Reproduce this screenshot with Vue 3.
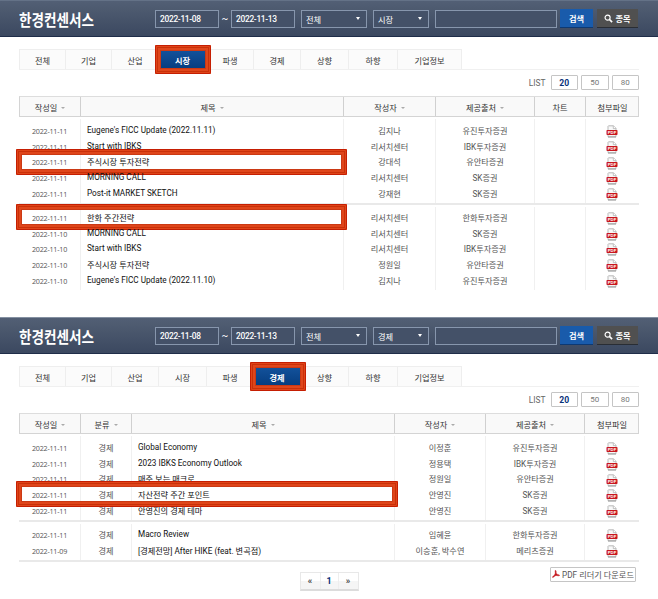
<template>
  <div class="page">
    <section v-for="panel in panels" :key="panel.category" class="panel" :class="panel.name">
      <header class="search-bar">
        <h1 class="logo">한경컨센서스</h1>
        <div class="field date">2022-11-08</div>
        <span class="tilde">~</span>
        <div class="field date">2022-11-13</div>
        <div class="field select select-all">전체<i class="arrow"></i></div>
        <div class="field select select-type">{{ panel.category }}<i class="arrow"></i></div>
        <div class="field keyword"></div>
        <button class="btn btn-search">검색</button>
        <button class="btn btn-item">
          <svg viewBox="0 0 10 10" width="9" height="9">
            <circle cx="4" cy="4" r="2.8" fill="none" stroke="#fff" stroke-width="1.3" />
            <path d="M6 6 L9 9" stroke="#fff" stroke-width="1.8" />
          </svg>
          <span>종목</span>
        </button>
      </header>

      <nav class="tabs">
        <div
          v-for="tab in tabs"
          :key="tab.label"
          class="tab"
          :class="{ active: tab.label === panel.category }"
          :style="{ width: tab.width + 'px' }"
        >
          <span>{{ tab.label }}</span>
          <div v-if="tab.label === panel.category" class="mark mark-tab"></div>
        </div>
      </nav>

      <div class="list-size">
        <span class="list-label">LIST</span>
        <span class="size on">20</span>
        <span class="size">50</span>
        <span class="size">80</span>
      </div>

      <div class="table">
        <div class="row head">
          <div v-for="col in panel.columns" :key="col.key" class="cell" :class="'col-' + col.key">
            <span>{{ col.label }}</span><i v-if="col.sort" class="sort"></i>
          </div>
        </div>
        <div v-for="(group, g) in panel.groups" :key="g" class="group">
          <div class="lines">
            <div v-for="col in panel.columns" :key="col.key" class="cell" :class="'col-' + col.key"></div>
          </div>
          <div v-for="(item, i) in group" :key="i" class="row">
            <div
              v-for="col in panel.columns"
              :key="col.key"
              class="cell"
              :class="'col-' + col.key"
            >
              <svg v-if="col.key === 'file'" class="pdf" viewBox="0 0 12 13" width="12" height="13">
                <path d="M2.5 .8 H7.5 L10 3.3 V11.7 H2 V1.3 Z" fill="#f8f8f8" stroke="#aaa" stroke-width=".8" />
                <path d="M7.3 .8 V3.6 H10" fill="#fff" stroke="#aaa" stroke-width=".7" />
                <path d="M2 12.1 H10" stroke="#888" stroke-width=".7" />
                <rect x=".5" y="5" width="11" height="5" rx=".8" fill="#c9161e" />
                <text x="6" y="9.1" text-anchor="middle">PDF</text>
              </svg>
              <span v-else>{{ item[col.key] }}</span>
            </div>
            <div v-if="item.marked" class="mark mark-row"></div>
          </div>
        </div>
      </div>

      <footer v-if="panel.paging" class="footer">
        <div class="paging">
          <span>«</span>
          <span class="current">1</span>
          <span>»</span>
        </div>
        <div class="reader">
          <svg viewBox="0 0 10 10" width="8" height="8">
            <path
              d="M4 .5 C5.8 .2 5 3 5.3 4 C5.8 5.5 8 5.6 9.5 6.5 C9.5 8 6.5 7 5 6.8 C3.5 7 1.8 9.5 .7 9.3 C.2 8 3 6.8 3.7 5.2 C4.5 3.5 3.7 2 4 .5 Z"
              fill="#c4161c"
              stroke="#c4161c"
              stroke-width=".6"
            />
          </svg>
          <span>PDF 리더기 다운로드</span>
        </div>
      </footer>
    </section>
  </div>
</template>

<script setup>
const tabs = [
  { label: '전체', width: 47 },
  { label: '기업', width: 46 },
  { label: '산업', width: 47 },
  { label: '시장', width: 48 },
  { label: '파생', width: 47 },
  { label: '경제', width: 47 },
  { label: '상향', width: 48 },
  { label: '하향', width: 49 },
  { label: '기업정보', width: 64 }
];

const date = { key: 'date', label: '작성일', sort: true };
const kind = { key: 'kind', label: '분류', sort: true };
const title = { key: 'title', label: '제목', sort: true };
const author = { key: 'author', label: '작성자', sort: true };
const source = { key: 'source', label: '제공출처', sort: true };
const chart = { key: 'chart', label: '차트' };
const file = { key: 'file', label: '첨부파일' };

const row = (date, title, author, source, marked = false) => ({
  date,
  kind: '경제',
  title,
  author,
  source,
  marked
});

const panels = [
  {
    name: 'market',
    category: '시장',
    columns: [date, title, author, source, chart, file],
    groups: [
      [
        row('2022-11-11', "Eugene's FICC Update (2022.11.11)", '김지나', '유진투자증권'),
        row('2022-11-11', 'Start with IBKS', '리서치센터', 'IBK투자증권'),
        row('2022-11-11', '주식시장 투자전략', '강대석', '유안타증권', true),
        row('2022-11-11', 'MORNING CALL', '리서치센터', 'SK증권'),
        row('2022-11-11', 'Post-it MARKET SKETCH', '강재현', 'SK증권')
      ],
      [
        row('2022-11-11', '한화 주간전략', '리서치센터', '한화투자증권', true),
        row('2022-11-10', 'MORNING CALL', '리서치센터', 'SK증권'),
        row('2022-11-10', 'Start with IBKS', '리서치센터', 'IBK투자증권'),
        row('2022-11-10', '주식시장 투자전략', '정원일', '유안타증권'),
        row('2022-11-10', "Eugene's FICC Update (2022.11.10)", '김지나', '유진투자증권')
      ]
    ]
  },
  {
    name: 'economy',
    category: '경제',
    columns: [date, kind, title, author, source, file],
    groups: [
      [
        row('2022-11-11', 'Global Economy', '이정훈', '유진투자증권'),
        row('2022-11-11', '2023 IBKS Economy Outlook', '정용택', 'IBK투자증권'),
        row('2022-11-11', '매주 보는 매크로', '정원일', '유안타증권'),
        row('2022-11-11', '자산전략 주간 포인트', '안영진', 'SK증권', true),
        row('2022-11-11', '안영진의 경제 테마', '안영진', 'SK증권')
      ],
      [
        row('2022-11-11', 'Macro Review', '임혜윤', '한화투자증권'),
        row('2022-11-09', '[경제전망] After HIKE (feat. 변곡점)', '이승훈, 박수연', '메리츠증권')
      ]
    ],
    paging: true
  }
];
</script>

<style>
body {
  background: #fff;
}
</style>

<style scoped>
.page {
  width: 658px;
  height: 599px;
  overflow: hidden;
  font-family: Roboto, "Noto Sans CJK KR", sans-serif;
  font-size: 8.2px;
  color: #333;
  white-space: nowrap;
}

.page * {
  box-sizing: border-box;
}

.panel {
  height: 317px;
}

/* Search bar */
.search-bar {
  display: flex;
  align-items: center;
  height: 37px;
  padding-left: 19px;
  background: linear-gradient(#525f75, #4e5b70 20%, #3b4860);
  border-top: 1px solid #647287;
  border-bottom: 1px solid #1f2d49;
}

.economy .search-bar {
  border-top-color: #8490a1;
}

.logo {
  width: 136px;
  margin: 0;
  font-family: "Noto Sans CJK KR", sans-serif;
  font-size: 16px;
  line-height: 18px;
  font-weight: 700;
  color: #fff;
  transform: scaleX(0.85);
  transform-origin: left center;
  flex-shrink: 0;
}

.field {
  display: flex;
  align-items: center;
  height: 18px;
  padding-left: 4px;
  border: 1px solid #8796ad;
  background: #445168;
  color: #fff;
  flex-shrink: 0;
}

.date {
  width: 64px;
  font-size: 8.4px;
  font-weight: 500;
  letter-spacing: -0.3px;
}

.tilde {
  width: 12px;
  text-align: center;
  color: #fff;
  font-size: 10px;
  flex-shrink: 0;
}

.select {
  justify-content: space-between;
  padding-right: 6px;
}

.select-all {
  width: 66px;
  margin-left: 6px;
}

.select-type {
  width: 56px;
  margin-left: 6px;
}

.arrow {
  border: 2.5px solid transparent;
  border-top: 3px solid #fff;
  border-bottom: 0;
}

.keyword {
  width: 122px;
  margin-left: 6px;
}

.btn {
  display: flex;
  align-items: center;
  justify-content: center;
  gap: 2px;
  height: 19px;
  padding: 0;
  border: 0;
  font-family: "Noto Sans CJK KR", sans-serif;
  font-size: 8.2px;
  font-weight: 700;
  color: #fff;
  flex-shrink: 0;
}

.btn-search {
  width: 33px;
  margin-left: 3px;
  background: #195bab;
  border-bottom: 1px solid #0d3973;
}

.btn-item {
  width: 41px;
  margin-left: 4px;
  background: #505050;
  border-bottom: 1px solid #292d34;
}

/* Category tabs */
.tabs {
  display: flex;
  height: 21px;
  margin: 12px 19px 0;
  border-bottom: 1px solid #f0f0f0;
}

.tab {
  position: relative;
  display: flex;
  align-items: center;
  justify-content: center;
  height: 20px;
  border: 1px solid #eee;
  border-left: 0;
  border-bottom: 0;
  background: #fbfbfb;
}

.tab:first-child {
  border-left: 1px solid #eee;
}

.tab.active {
  z-index: 1;
  background: linear-gradient(#13529c, #063d7f);
  color: #fff;
  font-weight: 700;
}

/* Red highlight frames */
.mark {
  position: absolute;
  border-radius: 2px;
  box-shadow:
    inset 0 0 0 1px #c51e02,
    inset 0 0 0 2px #df4519,
    inset 0 0 0 3px #ca3009,
    inset 0 0 0 5px #df461b,
    inset 0 0 0 6px #cb3914;
}

.mark-tab {
  left: -4px;
  top: -5px;
  width: 56px;
  height: 29px;
}

/* Page size */
.list-size {
  display: flex;
  justify-content: flex-end;
  align-items: center;
  gap: 3px;
  height: 15px;
  margin: 5px 19px 0;
}

.list-label {
  margin-right: 2px;
  font-size: 8.4px;
  color: #666;
}

.size {
  width: 27.5px;
  height: 15px;
  border: 1px solid #c5c5c5;
  border-radius: 1px;
  line-height: 14px;
  text-align: center;
  font-size: 8px;
  color: #777;
}

.size.on {
  color: #08327a;
  font-size: 8.6px;
  font-weight: 700;
}

/* Table */
.table {
  margin: 6px 19px 0;
}

.row {
  position: relative;
  display: flex;
  height: 15.8px;
}

.cell {
  display: flex;
  align-items: center;
  justify-content: center;
  flex-shrink: 0;
}

.col-date {
  width: 61px;
}

.col-kind {
  width: 51px;
}

.col-title {
  width: 263px;
}

.col-author {
  width: 92px;
}

.col-source {
  width: 99px;
}

.col-chart {
  width: 51px;
}

.col-file {
  width: 53px;
}

.economy .col-author {
  width: 91px;
}

.economy .col-file {
  width: 54px;
}

.head {
  height: 21px;
  border: 1px solid #d4d4d4;
  border-top-color: #ddd;
  background: #f9f9f9;
}

.head .cell {
  border-right: 1px solid #d0d0d0;
}

.head .cell:last-child {
  border-right: 0;
}

.sort {
  margin: 2px 0 0 4px;
  border: 2px solid transparent;
  border-top: 2px solid #aaa;
  border-bottom: 0;
}

.group {
  position: relative;
  padding: 5px 0 2px;
}

.group:not(:last-child),
.economy .group {
  border-bottom: 2px solid #e9e9e9;
}

.group:nth-child(3) {
  padding-top: 4px;
}

/* Column rules behind the rows */
.lines {
  position: absolute;
  inset: 2px 0 0 1px;
  display: flex;
}

.lines .cell {
  border-right: 1px solid #f0f0f0;
}

.lines .cell:last-child {
  border-right: 0;
}

.group .col-title {
  justify-content: flex-start;
  padding-left: 7px;
  color: #111;
}

.group .col-date {
  padding-top: 2px;
  font-family: "Open Sans", sans-serif;
  font-size: 7.2px;
  letter-spacing: -0.25px;
  color: #555;
}

.group .col-kind,
.group .col-author,
.group .col-source {
  padding-left: 1px;
  color: #555;
}

.group .col-file {
  padding-left: 1px;
}

.pdf {
  margin-top: 3px;
}

.pdf text {
  font: 700 4.2px "Liberation Sans", sans-serif;
  fill: #fff;
}

.mark-row {
  left: -3px;
  top: -5px;
  width: 331px;
  height: 26px;
}

.economy .mark-row {
  width: 382px;
}

/* Footer */
.footer {
  position: relative;
  display: flex;
  justify-content: center;
  padding-top: 10px;
}

.paging {
  display: flex;
  height: 19px;
  border: 1px solid #e8e8e8;
  border-bottom: 2px solid #dcdcdc;
  background: linear-gradient(#fff 50%, #f5f5f5 50%);
}

.paging span {
  width: 19px;
  line-height: 17px;
  text-align: center;
  font-size: 9px;
  font-weight: 700;
  color: #444;
}

.paging .current {
  border: 1px solid #eee;
  border-width: 0 1px;
  color: #08327a;
}

.reader {
  position: absolute;
  right: 22px;
  top: 5px;
  display: flex;
  align-items: center;
  justify-content: center;
  gap: 2px;
  width: 86px;
  height: 15px;
  border: 1px solid #c5c5c5;
  border-radius: 1px;
  color: #555;
}
</style>
